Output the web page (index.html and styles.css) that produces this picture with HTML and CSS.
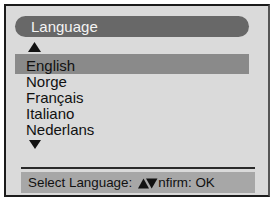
FILE: index.html
```html
<!DOCTYPE html>
<html lang="en">
<head>
    <meta charset="UTF-8">
    <title>Language</title>
    <link rel="stylesheet" href="styles.css">
</head>
<body>
    <div class="screen">
        <div class="title">Language</div>

        <svg class="arrow arrow-up" width="13" height="10" viewBox="0 0 13 10">
            <polygon points="0,10 6.5,0 13,10" fill="#111"/>
        </svg>

        <ul class="lang-list">
            <li class="lang selected">English</li>
            <li class="lang">Norge</li>
            <li class="lang">Français</li>
            <li class="lang">Italiano</li>
            <li class="lang">Nederlans</li>
        </ul>

        <svg class="arrow arrow-down" width="12" height="9" viewBox="0 0 12 9">
            <polygon points="0,0 12,0 6,9" fill="#111"/>
        </svg>

        <div class="footer">
            <div class="status">
                <span>Select Language:</span>
                <svg class="keys" width="20" height="11" viewBox="0 0 20 11">
                    <polygon points="0,10.5 5.5,0.5 11,10.5" fill="#111"/>
                    <polygon points="8,0.5 19.5,0.5 13.7,10.5" fill="#111"/>
                </svg>
                <span>nfirm: OK</span>
            </div>
        </div>
    </div>
</body>
</html>
```

FILE: styles.css
```css
* {
    margin: 0;
    padding: 0;
    box-sizing: border-box;
}

body {
    background: #fff;
    font-family: "Liberation Sans", Arial, sans-serif;
    color: #111;
}

.screen {
    margin: 4px 0 0 4px;
    width: 266px;
    height: 193px;
    border: 2px solid #1c1c1c;
    border-right-color: #555;
    background: #dadada;
    display: flex;
    flex-direction: column;
}

.title {
    margin: 10px 19px 0 9px;
    height: 21px;
    border-radius: 11px;
    background: #686868;
    color: #f4f4f4;
    font-size: 15px;
    line-height: 21px;
    padding-left: 16px;
}

.arrow {
    display: block;
}

.arrow-up {
    margin: 5px 0 0 22px;
}

.lang-list {
    list-style: none;
    margin: 2px 19px 0 9px;
    font-size: 15px;
}

.lang {
    height: 16px;
    line-height: 16px;
    padding-left: 11px;
    white-space: nowrap;
}

.lang.selected {
    height: 20px;
    padding-top: 4px;
    background: #8a8a8a;
}

.arrow-down {
    margin: 2px 0 0 23px;
}

.footer {
    margin: auto 13px 2px 15px;
    border-top: 2px solid #2a2a2a;
    padding-top: 3px;
}

.status {
    height: 21px;
    background: #a7a7a7;
    font-size: 13.4px;
    line-height: 21px;
    padding-left: 7px;
    display: flex;
    align-items: center;
    white-space: nowrap;
}

.keys {
    margin: 1px 0 0 6px;
}
```
